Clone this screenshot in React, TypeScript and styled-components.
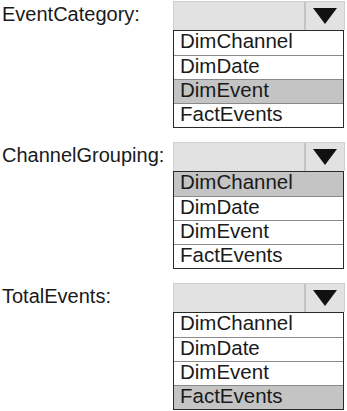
import styled, { createGlobalStyle } from "styled-components";

const GlobalStyle = createGlobalStyle`
  html, body {
    margin: 0;
    padding: 0;
    background: #fff;
  }
  body {
    font-family: "Liberation Sans", Arial, sans-serif;
    color: #1a1a1a;
  }
`;

type fieldProps = {
  label: string;
  options: string[];
  selected: number;
};

const Page = styled.div`
  width: 347px;
  height: 411px;
  display: flex;
  flex-direction: column;
  gap: 14px;
  padding-top: 1px;
  box-sizing: border-box;
`;

const Field = styled.div`
  display: flex;
  align-items: flex-start;
`;

const Label = styled.div`
  width: 173px;
  padding-left: 2px;
  padding-top: 1px;
  box-sizing: border-box;
  font-size: 20px;
  line-height: 24px;
`;

const Combo = styled.div`
  width: 172px;
  display: flex;
  flex-direction: column;
`;

const Header = styled.div`
  height: 29px;
  display: flex;
  background: #e2e2e2;
  border: 1px solid #cfcfcf;
  border-bottom: none;
  box-sizing: border-box;
`;

const Blank = styled.div`
  flex: 1;
`;

const ArrowCell = styled.div`
  width: 38px;
  border-left: 2px solid #c4c4c4;
  display: flex;
  align-items: center;
  justify-content: center;
`;

const List = styled.div`
  width: 171px;
  border: 1px solid #2a2a2a;
  box-sizing: border-box;
  display: flex;
  flex-direction: column;
`;

const Row = styled.div<{ $active: boolean }>`
  height: 24px;
  box-sizing: border-box;
  padding-left: 6px;
  font-size: 20.5px;
  line-height: 20px;
  background: ${(p) => (p.$active ? "#c4c4c4" : "#fff")};
  & + & {
    border-top: 1px solid #8a8a8a;
  }
`;

const Arrow = () => (
  <svg width="24" height="16" viewBox="0 0 24 16">
    <polygon points="0,0 24,0 12,16" fill="#111" />
  </svg>
);

const Dropdown = ({ label, options, selected }: fieldProps) => (
  <Field>
    <Label>{label}</Label>
    <Combo>
      <Header>
        <Blank />
        <ArrowCell>
          <Arrow />
        </ArrowCell>
      </Header>
      <List>
        {options.map((o, i) => (
          <Row key={o} $active={i === selected}>
            {o}
          </Row>
        ))}
      </List>
    </Combo>
  </Field>
);

const tables = ["DimChannel", "DimDate", "DimEvent", "FactEvents"];

const App = () => (
  <>
    <GlobalStyle />
    <Page>
      <Dropdown label="EventCategory:" options={tables} selected={2} />
      <Dropdown label="ChannelGrouping:" options={tables} selected={0} />
      <Dropdown label="TotalEvents:" options={tables} selected={3} />
    </Page>
  </>
);

export default App;
